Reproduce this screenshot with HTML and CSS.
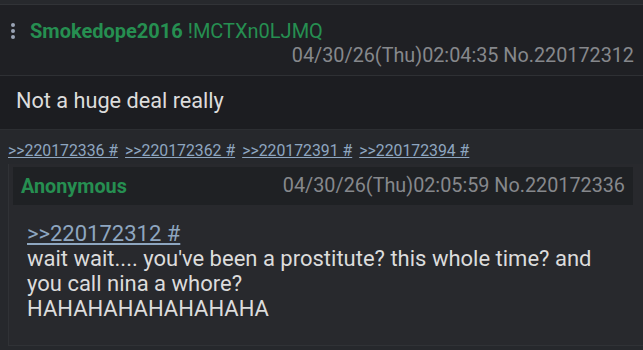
FILE: index.html
```html
<!DOCTYPE html>
<html lang="en">
<head>
    <meta charset="UTF-8">
    <meta name="viewport" content="width=device-width, initial-scale=1.0">
    <title>Thread</title>
    <link rel="stylesheet" href="styles.css">
</head>
<body>
    <div class="topbar"></div>
    <div class="post-head">
        <div class="name-row">
            <svg class="menu" width="6" height="18" viewBox="0 0 6 18">
                <circle cx="3" cy="3" r="2"></circle>
                <circle cx="3" cy="9" r="2"></circle>
                <circle cx="3" cy="15" r="2"></circle>
            </svg>
            <span class="name">Smokedope2016</span>
            <span class="trip">!MCTXn0LJMQ</span>
        </div>
        <div class="date">04/30/26(Thu)02:04:35 No.220172312</div>
    </div>
    <div class="post-body">Not a huge deal really</div>

    <div class="replies">
        <div class="backlinks">
            <a href="#">&gt;&gt;220172336 #</a>
            <a href="#">&gt;&gt;220172362 #</a>
            <a href="#">&gt;&gt;220172391 #</a>
            <a href="#">&gt;&gt;220172394 #</a>
        </div>
        <div class="reply">
            <div class="reply-head">
                <span class="name small">Anonymous</span>
                <span class="date">04/30/26(Thu)02:05:59 No.220172336</span>
            </div>
            <div class="reply-body">
                <a href="#" class="quote">&gt;&gt;220172312 #</a><br>
                wait wait.... you've been a prostitute? this whole time? and you call nina a whore?<br>
                HAHAHAHAHAHAHAHA
            </div>
        </div>
    </div>
</body>
</html>
```

FILE: styles.css
```css
body {
    margin: 0;
    background-color: #1c1d21;
    font-family: Roboto, "Liberation Sans", sans-serif;
    color: #d6d6d6;
    overflow: hidden;
}

a {
    color: #8ea6c0;
}

.topbar {
    height: 4px;
    background-color: #27292d;
    border-bottom: 1px solid #313337;
}

.post-head {
    background-color: #1f2024;
    padding: 16px 9px 7px 10px;
    border-bottom: 1px solid #2e3034;
}

.name-row {
    display: flex;
    align-items: center;
    gap: 5px;
    height: 20px;
}

.menu {
    fill: #9aa3b5;
    margin-right: 9px;
}

.name {
    color: #268f51;
    font-weight: bold;
    font-size: 20px;
}

.trip {
    color: #268f51;
    font-size: 20px;
}

.date {
    color: #86888c;
    font-size: 19.8px;
    text-align: right;
    line-height: 24px;
    margin-top: 3px;
}

.post-body {
    font-size: 21.7px;
    padding: 14px 16px 17px;
    line-height: 22px;
    color: #dcdcdc;
}

.replies {
    background-color: #26282c;
    border-top: 1px solid #2c2e32;
    padding: 12px 0 6px 8px;
}

.backlinks {
    font-size: 15.8px;
    display: flex;
    gap: 7px;
    line-height: 18px;
}

.reply {
    margin-top: 4px;
    background-color: #28292d;
    border-left: 1px solid #303236;
    border-bottom: 1px solid #303236;
    padding: 3px 10px 24px 4px;
}

.reply-head {
    background-color: #1f2124;
    display: flex;
    justify-content: space-between;
    align-items: center;
    padding: 0 8px 0 8px;
    height: 38px;
}

.reply-head .date {
    margin-top: 0;
    font-size: 19.8px;
}

.name.small {
    font-size: 19.8px;
}

.reply-body {
    padding: 16px 12px 0 14px;
    font-size: 22px;
    line-height: 25px;
    color: #dcdcdc;
}
```
